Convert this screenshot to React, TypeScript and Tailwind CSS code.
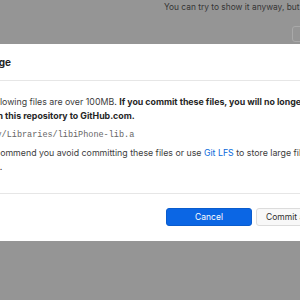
export default function App() {
  return (
    <div className="w-[300px] h-[300px] overflow-hidden bg-[#959595] font-['Inter',sans-serif]">
      {/* dimmed app behind the dialog */}
      <div className="h-[44px] pl-[164px] pt-[2px]">
        <p className="text-[8.4px] leading-[11px] text-[#363636] whitespace-nowrap">
          You can try to show it anyway, but performance may be negatively impacted.
        </p>
        <div className="mt-[13px] ml-[128px] h-[16px] w-[60px] rounded-[3px] border border-[#a9a9a9]" />
      </div>

      {/* dialog */}
      <div className="-ml-[41px] w-[395px] h-[197px] bg-white flex flex-col">
        <div className="h-[37px] shrink-0 border-b border-[#e6e6e6] px-[12px] flex items-center">
          <h1 className="-ml-[28px] text-[10px] font-bold text-[#262626] whitespace-nowrap">
            Files too large
          </h1>
        </div>

        <div className="shrink-0 border-b border-[#e6e6e6] px-[12px] pt-[14px] pb-[19px] text-[8.8px] leading-[14px] text-[#3d3d3d] whitespace-nowrap">
          <p>
            The following files are over 100MB.{" "}
            <strong className="font-bold text-[#262626]">
              If you commit these files, you will no longer be able
              <br />
              to push this repository to GitHub.com.
            </strong>
          </p>
          <p className="mt-[5px] font-['Liberation_Mono',monospace] text-[8.5px] text-[#666]">
            Legacy/Libraries/libiPhone-lib.a
          </p>
          <p className="mt-[4px]">
            We recommend you avoid committing these files or use{" "}
            <span className="text-[#0969da]">Git LFS</span> to store large files on
            <br />
            GitHub.
          </p>
        </div>

        <div className="flex-1 flex justify-end gap-[4px] px-[12px] pt-[14px]">
          <button className="h-[18px] w-[86px] rounded-[3px] bg-[#0b66e4] border border-[#0a5ccd] text-[8.5px] text-white">
            Cancel
          </button>
          <button className="h-[18px] w-[86px] rounded-[3px] bg-[#f8f8f8] border border-[#dcdcdc] text-[8.5px] text-[#2e2e2e] text-left pl-[9px] whitespace-nowrap">
            Commit anyway
          </button>
        </div>
      </div>
    </div>
  );
}
